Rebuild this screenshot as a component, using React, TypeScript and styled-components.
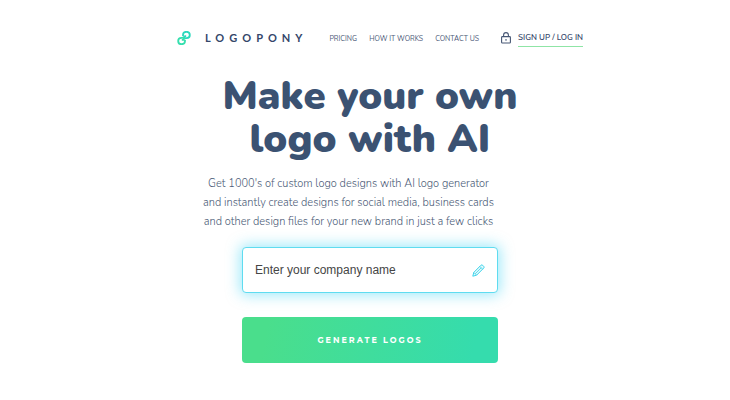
import React from "react";
import styled, { createGlobalStyle } from "styled-components";

const GlobalStyle = createGlobalStyle`
  *, *::before, *::after { box-sizing: border-box; }
  body {
    margin: 0;
    background: #fff;
    color: #3b5272;
    font-family: Nunito, Lato, sans-serif;
  }
`;

const Page = styled.div`
  padding: 28px 0 32px 10px;
`;

const Header = styled.header`
  display: flex;
  align-items: center;
  justify-content: center;
  height: 20px;
  padding-left: 20px;
`;

const Brand = styled.a`
  display: flex;
  align-items: center;
  gap: 14px;
  color: #34466a;
  text-decoration: none;
`;

const BrandName = styled.span`
  font: 700 11px/16px Lato, sans-serif;
  letter-spacing: 5px;
`;

const Nav = styled.nav`
  display: flex;
  gap: 12px;
  margin: 2px 22px 0 22px;
`;

const NavLink = styled.a`
  color: #4a5977;
  font-size: 7px;
  line-height: 12px;
  text-decoration: none;
  white-space: nowrap;
`;

const Account = styled.a`
  display: flex;
  align-items: center;
  gap: 7px;
  color: #34466a;
  text-decoration: none;
`;

const AccountLabel = styled.span`
  border-bottom: 1px solid #8fe5a6;
  font-size: 8px;
  font-weight: 600;
  line-height: 16px;
  white-space: nowrap;
`;

const Hero = styled.main`
  display: flex;
  flex-direction: column;
  align-items: center;
`;

const Title = styled.h1`
  margin: 27px 0 0;
  color: #3b5272;
  font: 900 40px/43px Nunito, "Noto Sans", sans-serif;
  text-align: center;
`;

const Intro = styled.p`
  margin: 13px 0 0;
  padding-right: 43px;
  color: #4a5a76;
  font: 300 11px/19px Nunito, Roboto, sans-serif;
  text-align: center;
`;

const Form = styled.form`
  display: flex;
  flex-direction: column;
  gap: 24px;
  width: 100%;
  max-width: 256px;
  margin-top: 16px;
`;

const Field = styled.label`
  display: flex;
  align-items: center;
  height: 46px;
  padding: 0 12px;
  border: 1px solid #5fdcf0;
  border-radius: 4px;
  background: #fff;
  box-shadow: 0 0 14px 2px rgba(60, 212, 245, 0.5);
`;

const NameInput = styled.input`
  flex: 1;
  min-width: 0;
  padding: 0;
  border: 0;
  outline: 0;
  background: none;
  font: 12px/18px "Liberation Sans", Arial, sans-serif;
  &::placeholder { color: #454545; opacity: 1; }
`;

const Submit = styled.button`
  height: 46px;
  padding: 0;
  border: 0;
  border-radius: 4px;
  background: linear-gradient(100deg, #4ade8c 10%, #35dcad 90%);
  color: #fff;
  font: 700 8px/12px Montserrat, Lato, sans-serif;
  letter-spacing: 2px;
`;

function ChainLogo() {
  return (
    <svg width="14" height="14" viewBox="0 0 14 14" fill="none" strokeWidth="1.8" aria-hidden="true">
      <path d="M6 5.2V4A3.4 3.2 0 1 1 9.6 7.2H8.4Q7 7.2 7 6.2T8.3 5.1H9.2" stroke="#2bd9bd" />
      <path d="M8 8.8V10A3.4 3.2 0 1 1 4.4 6.8H5.6Q7 6.8 7 7.8T5.7 8.9H4.8" stroke="#35dfae" />
    </svg>
  );
}

function LockIcon() {
  return (
    <svg width="10" height="12" viewBox="0 0 10 12" fill="none" stroke="#465674" strokeWidth="1.1" aria-hidden="true">
      <rect x=".6" y="4.6" width="8.8" height="6.4" rx=".8" />
      <path d="M2.6 4.6V3a2.4 2.4 0 0 1 4.8 0v1.6M5 7v1.8" />
    </svg>
  );
}

function PencilIcon() {
  return (
    <svg width="13" height="13" viewBox="0 0 13 13" fill="none" stroke="#3fd3ea" strokeLinejoin="round" aria-hidden="true">
      <path fill="#e2fafd" d="M.8 12.2 1.8 8.4 8.9 1.3Q9.8.4 10.7 1.3L11.7 2.3Q12.6 3.2 11.7 4.1L4.6 11.2Z" />
      <path strokeWidth=".8" d="M1.8 8.4 4.6 11.2M7.8 2.4 10.6 5.2M3.2 9.8 9.2 3.8" />
    </svg>
  );
}

export default function App() {
  return (
    <>
      <GlobalStyle />
      <Page>
        <Header>
          <Brand href="#">
            <ChainLogo />
            <BrandName>LOGOPONY</BrandName>
          </Brand>
          <Nav>
            <NavLink href="#pricing">PRICING</NavLink>
            <NavLink href="#how">HOW IT WORKS</NavLink>
            <NavLink href="#contact">CONTACT US</NavLink>
          </Nav>
          <Account href="#login">
            <LockIcon />
            <AccountLabel>SIGN UP / LOG IN</AccountLabel>
          </Account>
        </Header>
        <Hero>
          <Title>Make your own<br />logo with AI</Title>
          <Intro>
            Get 1000's of custom logo designs with AI logo generator<br />
            and instantly create designs for social media, business cards<br />
            and other design files for your new brand in just a few clicks
          </Intro>
          <Form onSubmit={(event) => event.preventDefault()}>
            <Field>
              <NameInput type="text" aria-label="Company name" placeholder="Enter your company name" />
              <PencilIcon />
            </Field>
            <Submit type="submit">GENERATE LOGOS</Submit>
          </Form>
        </Hero>
      </Page>
    </>
  );
}
